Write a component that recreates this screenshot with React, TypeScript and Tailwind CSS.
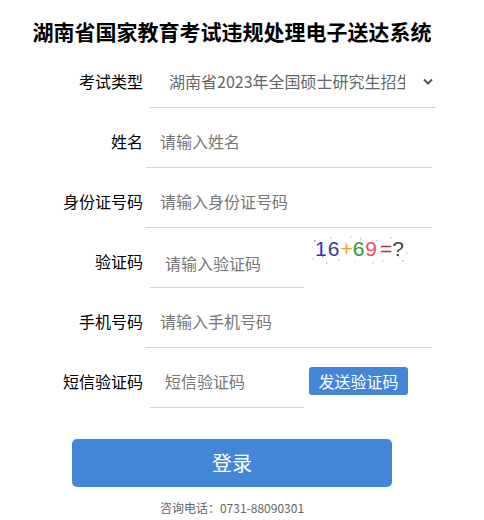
import { useState } from "react";

const font = "font-['Microsoft_YaHei','Noto_Sans_CJK_SC',sans-serif]";

function Captcha() {
  // random-ish noise dots
  const dots = [
    [4, 6, "#e6a"], [12, 22, "#9ad"], [20, 3, "#ccc"], [28, 25, "#fa8"], [35, 8, "#acd"],
    [44, 27, "#ddd"], [50, 4, "#f9c"], [58, 20, "#9c9"], [66, 6, "#ccd"], [72, 26, "#fbb"],
    [80, 3, "#bbe"], [88, 22, "#ddb"], [94, 9, "#fcd"], [8, 14, "#ddd"], [62, 28, "#cce"],
    [40, 2, "#dcc"], [85, 15, "#cdd"], [16, 28, "#eac"], [54, 12, "#ddf"], [92, 26, "#bbb"],
    [2, 24, "#fbd"], [24, 15, "#ddd"], [47, 18, "#bcf"], [70, 13, "#edc"], [96, 18, "#ccc"],
  ] as const;
  return (
    <div className="relative ml-[6px] w-[98px] h-[30px] -mt-[28px] select-none">
      <svg className="absolute inset-0" width="98" height="30">
        {dots.map(([x, y, c], i) => (
          <rect key={i} x={x} y={y} width="1.5" height="1.5" fill={c} />
        ))}
      </svg>
      <div className="absolute left-[5px] top-[2px] flex items-baseline text-[21px] leading-[26px] font-['Liberation_Sans',sans-serif]">
        <span className="text-[#2f2fd6]">1</span>
        <span className="text-[#3a3a9a] ml-[1px]">6</span>
        <span className="text-[#f0a030] ml-[1px]">+</span>
        <span className="text-[#2a9a3a]">6</span>
        <span className="text-[#f04a5a] ml-[1px]">9</span>
        <span className="text-[#b03040] ml-[3px]">=</span>
        <span className="text-[#444]">?</span>
      </div>
    </div>
  );
}

function Label({ text }: { text: string }) {
  return <div className="w-[143px] pb-[4px] text-right text-[16px] text-black">{text}</div>;
}

const inputWide =
  "ml-[3px] w-[286px] h-[50px] border-b border-[#d3d6dc] pl-[14px] pb-[3px] text-[16px] outline-none placeholder:text-[#777]";
const inputShort =
  "ml-[7px] w-[154px] h-[50px] border-b border-[#d3d6dc] pl-[15px] text-[16px] outline-none placeholder:text-[#777]";

export default function App() {
  const [examType] = useState("湖南省2023年全国硕士研究生招生考试");

  return (
    <div className={`w-[464px] h-[520px] bg-white ${font}`}>
      <h1 className="pt-[17px] text-center text-[21px] leading-[28px] font-bold text-black">
        湖南省国家教育考试违规处理电子送达系统
      </h1>

      <div className="mt-[13px] flex flex-col gap-[10px]">
        <div className="flex items-center">
          <Label text="考试类型" />
          <div className="ml-[7px] w-[286px] h-[50px] pb-[3px] border-b border-[#d3d6dc] flex items-center">
            <div className="pl-[19px] w-[255px] overflow-hidden whitespace-nowrap text-[16px] text-[#666]">
              {examType}
            </div>
            <svg className="ml-[18px]" width="10" height="7" viewBox="0 0 10 7">
              <polyline points="1,1.5 5,5.5 9,1.5" fill="none" stroke="#555" strokeWidth="2" />
            </svg>
          </div>
        </div>

        <div className="flex items-center">
          <Label text="姓名" />
          <input className={inputWide} placeholder="请输入姓名" />
        </div>

        <div className="flex items-center">
          <Label text="身份证号码" />
          <input className={inputWide} placeholder="请输入身份证号码" />
        </div>

        <div className="flex items-center">
          <Label text="验证码" />
          <input className={inputShort} placeholder="请输入验证码" />
          <Captcha />
        </div>

        <div className="flex items-center">
          <Label text="手机号码" />
          <input className={inputWide} placeholder="请输入手机号码" />
        </div>

        <div className="flex items-center">
          <Label text="短信验证码" />
          <input className={`${inputShort} pb-[3px]`} placeholder="短信验证码" />
          <button className="ml-[5px] w-[99px] h-[28px] rounded-[3px] bg-[#4285d9] text-white text-[16px] leading-[28px] -mt-[4px]">
            发送验证码
          </button>
        </div>
      </div>

      <button className="mt-[31px] mx-auto block w-[320px] h-[48px] rounded-[5px] bg-[#4286d8] text-white text-[20px]">
        登录
      </button>

      <p className="mt-[12px] text-center text-[12px] leading-[18px] text-[#666]">
        咨询电话：0731-88090301
      </p>
    </div>
  );
}
